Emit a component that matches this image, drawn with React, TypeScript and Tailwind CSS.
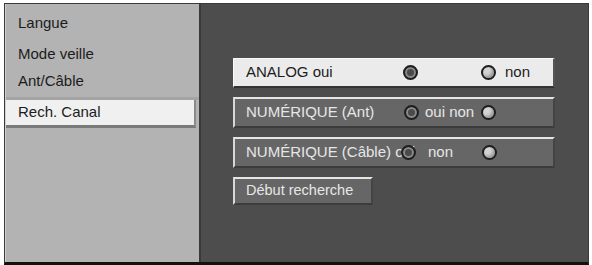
import React from "react";

function Radio({ on, className = "" }: { on?: boolean; className?: string }) {
  return (
    <span
      className={`block shrink-0 w-[15px] h-[15px] rounded-full border-2 border-[#1e1e1e] ${
        on ? "bg-[#4a4a4a] shadow-[inset_0_0_0_2px_#8a8a8a]" : "bg-[#d4d4d4] shadow-[inset_-2px_-2px_3px_#9a9a9a]"
      } ${className}`}
    />
  );
}

const rowDark =
  "flex items-center w-[322px] h-[31px] bg-[#666666] border-t-2 border-l-2 border-t-[#e4e4e4] border-l-[#d8d8d8] border-b-2 border-r-2 border-b-[#3c3c3c] border-r-[#444] pl-[11px] text-[#e6e6e6]";

export default function App() {
  return (
    <div className="w-[592px] h-[265px] bg-white pt-[3px] pl-[4px]" style={{ fontFamily: '"Liberation Sans", Arial, sans-serif' }}>
      <div className="flex w-[585px] h-[262px] border border-[#3a3a3a] border-b-[3px] border-b-[#111]">
        {/* left menu */}
        <div className="w-[194px] h-full bg-[#b3b3b3] border-l border-[#d0d0d0] pt-[7px] text-[15px] text-[#1c1c1c]">
          <div className="pl-[12px] h-[24px] leading-[24px]">Langue</div>
          <div className="pl-[12px] h-[27px] mt-[5px] leading-[27px]">Mode veille</div>
          <div className="pl-[12px] h-[24px] leading-[28px]">Ant/Câble</div>
          <div className="h-[3px] bg-[#a4a4a4] mt-[6px]" />
          <div className="flex items-center h-[28px] w-[190px] bg-[#f0f0f0] pl-[12px] border-b-[3px] border-r-2 border-b-[#7a7a7a] border-r-[#8a8a8a]">
            Rech. Canal
          </div>
        </div>
        <div className="w-[2px] h-full bg-[#3a3a3a]" />
        {/* right panel */}
        <div className="flex-1 h-full bg-[#4d4d4d] pl-[32px] pt-[54px] text-[15px]">
          <div className="flex items-center w-[322px] h-[30px] bg-[#ebebeb] border-t border-l border-[#fafafa] border-b-2 border-r-2 border-b-[#333] border-r-[#555] pl-[12px] text-[#1c1c1c]">
            <span className="w-[157px] whitespace-nowrap">ANALOG oui</span>
            <Radio on />
            <Radio className="ml-[63px]" />
            <span className="ml-[9px]">non</span>
          </div>
          <div className={`${rowDark} mt-[9px]`}>
            <span className="w-[158px] whitespace-nowrap">NUMÉRIQUE (Ant)</span>
            <Radio on />
            <span className="ml-[6px] w-[56px] whitespace-nowrap">oui non</span>
            <Radio />
          </div>
          <div className={`${rowDark} mt-[9px]`}>
            <span className="w-[155px] whitespace-nowrap">NUMÉRIQUE (Câble) oui</span>
            <Radio on />
            <span className="ml-[12px] w-[54px]">non</span>
            <Radio />
          </div>
          <div className="flex items-center w-[140px] h-[28px] mt-[9px] bg-[#666666] border-t-2 border-l-2 border-t-[#e4e4e4] border-l-[#d8d8d8] border-b-2 border-r-2 border-b-[#3c3c3c] border-r-[#444] pl-[11px] text-[14.5px] text-[#e6e6e6]">
            Début recherche
          </div>
        </div>
      </div>
    </div>
  );
}
